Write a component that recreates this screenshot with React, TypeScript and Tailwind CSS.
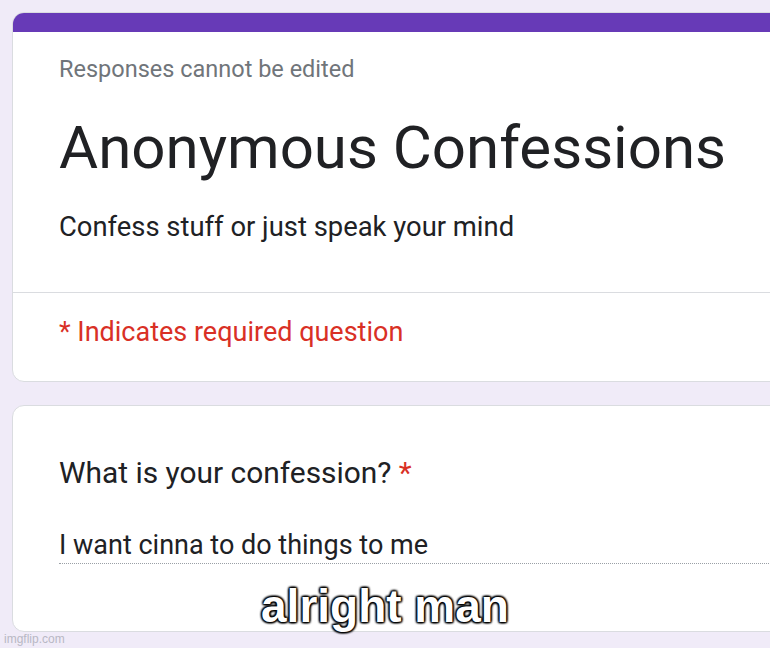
import React from 'react';

const App = () => {
  return (
    <div
      className="relative w-[770px] h-[648px] overflow-hidden bg-[#f0ebf8]"
      style={{ fontFamily: 'Roboto, "Liberation Sans", sans-serif' }}
    >
      <div className="pl-[12px] pt-[12px] flex flex-col gap-[23px] w-[820px]">
        {/* header card */}
        <div className="rounded-[12px] border border-[#dadce0] bg-white overflow-hidden">
          <div className="h-[19px] bg-[#673ab7]" />
          <div className="pl-[46px] pt-[23px] pb-[49px]">
            <p className="text-[23.5px] leading-[28px] text-[#70757a]">Responses cannot be edited</p>
            <h1 className="mt-[29px] text-[60px] leading-[72px] text-[#202124]">Anonymous Confessions</h1>
            <p className="mt-[27px] text-[27.4px] leading-[32px] text-[#202124]">Confess stuff or just speak your mind</p>
          </div>
          <div className="border-t border-[#dadce0] pl-[46px] pt-[23px] pb-[33px]">
            <p className="text-[27px] leading-[32px] text-[#d93025]">* Indicates required question</p>
          </div>
        </div>

        {/* question card */}
        <div className="h-[227px] rounded-[12px] border border-[#dadce0] bg-white pl-[46px] pt-[49px]">
          <p className="text-[29.9px] leading-[36px] text-[#202124]">
            What is your confession? <span className="text-[#d93025]">*</span>
          </p>
          <div className="mt-[38px] border-b border-dotted border-[#9aa0a6] pb-[2px]">
            <p className="text-[27px] leading-[32px] text-[#202124]">I want cinna to do things to me</p>
          </div>
        </div>
      </div>

      {/* meme caption */}
      <div
        className="absolute left-0 w-[770px] top-[580px] text-center text-white text-[46px] leading-[52px] font-bold"
        style={{
          fontFamily: '"Liberation Sans", Arial, sans-serif',
          textShadow: '0 0 3px #000, 0 0 3px #000, 1px 1px 2px #000, -1px -1px 2px #000, 1px -1px 2px #000, -1px 1px 2px #000',
        }}
      >
        alright man
      </div>

      {/* watermark */}
      <div
        className="absolute left-[4px] bottom-[2px] text-[12px] leading-[14px] text-[#b8b8c4]"
        style={{ fontFamily: '"Liberation Sans", Arial, sans-serif' }}
      >
        imgflip.com
      </div>
    </div>
  );
};

export default App;
